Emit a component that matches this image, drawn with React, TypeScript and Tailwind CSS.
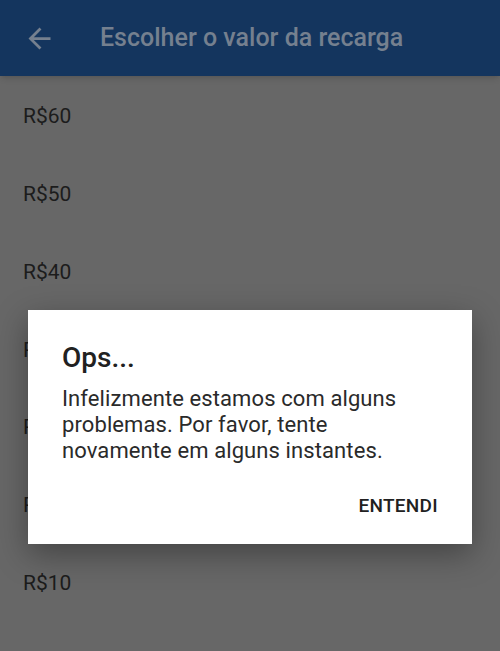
import React from 'react';

const amounts = ['R$60', 'R$50', 'R$40', 'R$30', 'R$20', 'R$15', 'R$10'];

function ArrowBack() {
  return (
    <svg width="33" height="33" viewBox="0 0 24 24" fill="currentColor">
      <path d="M20 11H7.83l5.59-5.59L12 4l-8 8 8 8 1.41-1.41L7.83 13H20v-2z" />
    </svg>
  );
}

export default function App() {
  return (
    <div
      className="relative w-[500px] h-[651px] overflow-hidden bg-[#676767]"
      style={{ fontFamily: 'Roboto, "Liberation Sans", sans-serif' }}
    >
      <header className="h-[76px] bg-[#14355e] flex items-center pl-[23px] text-[#75808f] shadow-md">
        <ArrowBack />
        <h1 className="ml-[44px] text-[25px] font-medium">Escolher o valor da recarga</h1>
      </header>

      <ul className="pt-[2px]">
        {amounts.map((a) => (
          <li key={a} className="h-[77.8px] flex items-center pl-[23px] text-[21px] text-[#1c1c1c]">
            {a}
          </li>
        ))}
      </ul>

      {/* dialog */}
      <div className="absolute left-[28px] top-[310px] w-[444px] h-[234px] bg-white shadow-[0_10px_30px_rgba(0,0,0,0.35)] px-[34px] pt-[28px] text-[#212121]">
        <h2 className="text-[28px] font-medium leading-[40px]">Ops...</h2>
        <p className="mt-[8px] text-[22px] leading-[26px] tracking-[0.1px] text-[#2a2a2a]">
          Infelizmente estamos com alguns problemas. Por favor, tente novamente em alguns instantes.
        </p>
        <div className="flex justify-end mt-[30px]">
          <button className="text-[19px] leading-[24px] font-medium tracking-[0.3px] text-[#212121]">ENTENDI</button>
        </div>
      </div>
    </div>
  );
}
